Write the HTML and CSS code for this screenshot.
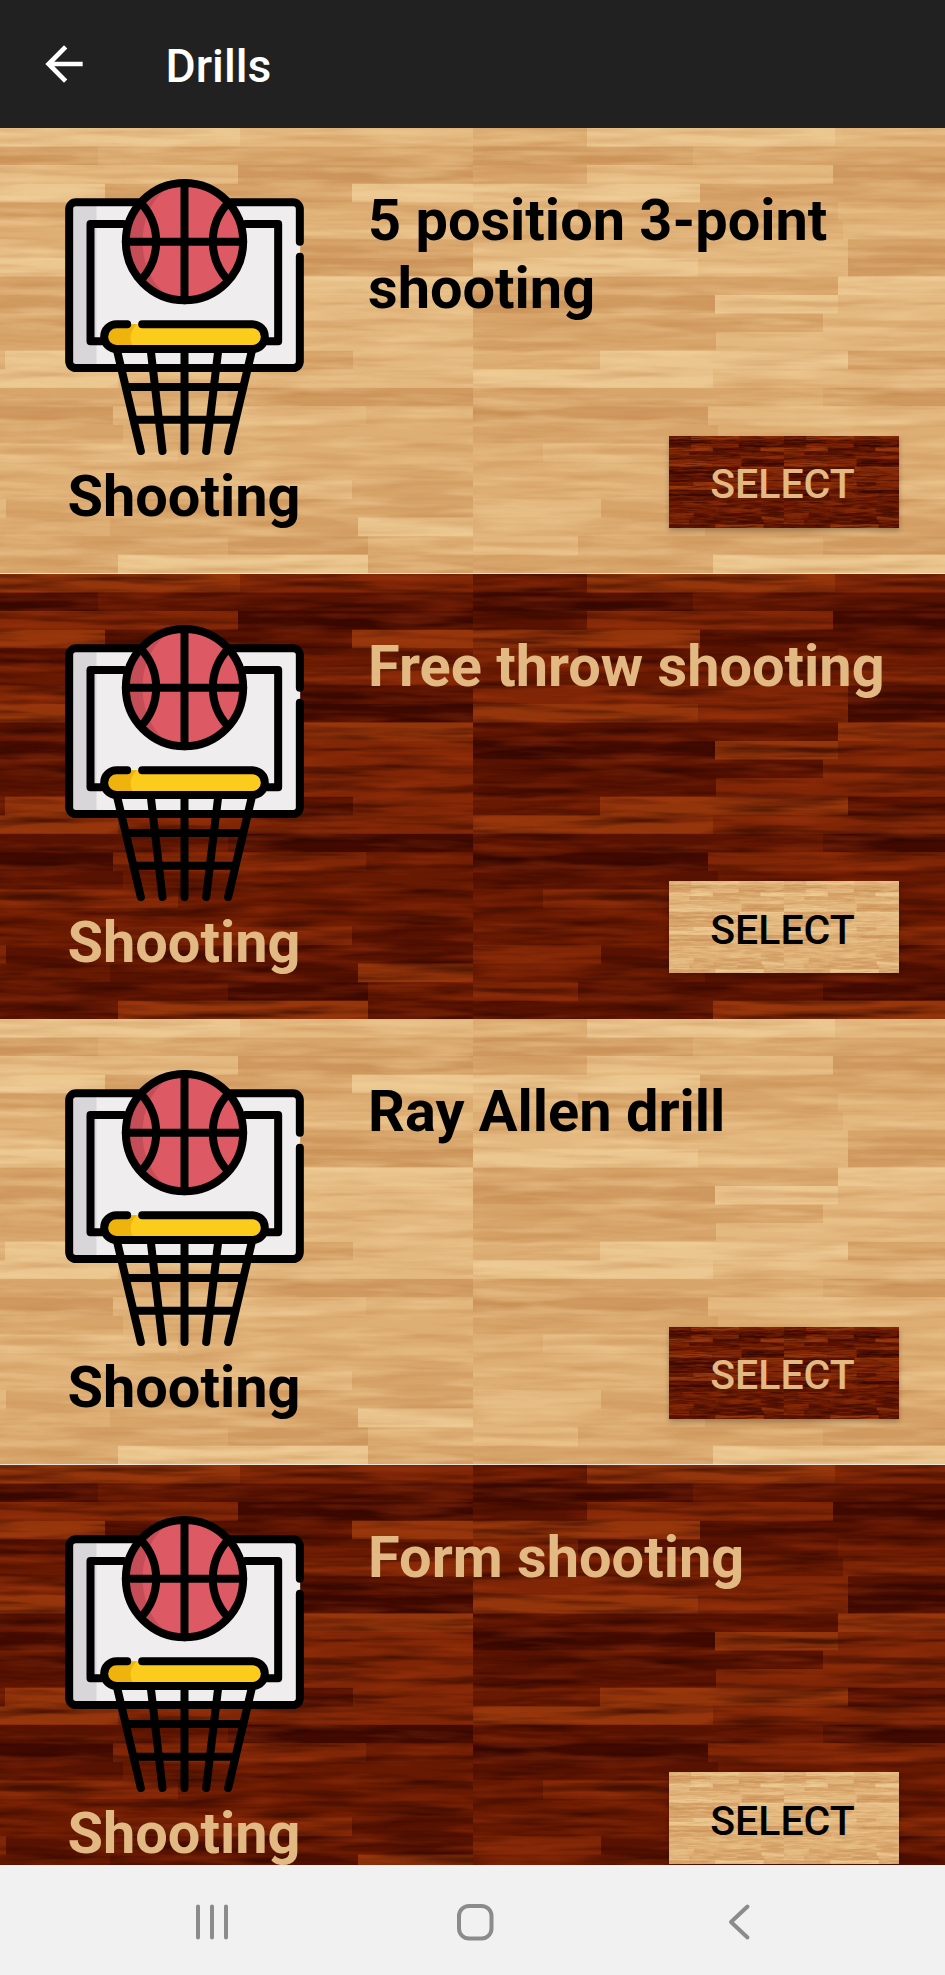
FILE: index.html
```html
<!DOCTYPE html>
<html lang="en">
<head>
<meta charset="utf-8">
<title>Drills</title>
<link rel="stylesheet" href="styles.css">
</head>
<body>
<svg class="defs" width="0" height="0" aria-hidden="true">
  <defs>
    <filter id="grain" x="0" y="0" width="100%" height="100%" color-interpolation-filters="sRGB">
      <feTurbulence type="fractalNoise" baseFrequency="0.008 0.11" numOctaves="3" seed="7"/>
      <feColorMatrix values="0 0 0 0 0  0 0 0 0 0  0 0 0 0 0  2.6 0 0 0 -1.1" result="n"/>
      <feComposite in="SourceGraphic" in2="n" operator="in"/>
    </filter>
    <filter id="shine" x="0" y="0" width="100%" height="100%" color-interpolation-filters="sRGB">
      <feTurbulence type="fractalNoise" baseFrequency="0.01 0.1" numOctaves="3" seed="23"/>
      <feColorMatrix values="0 0 0 0 0  0 0 0 0 0  0 0 0 0 0  2.6 0 0 0 -1.1" result="n"/>
      <feComposite in="SourceGraphic" in2="n" operator="in"/>
    </filter>

    <g id="planks">
      <rect class="t3" width="595" height="446"/>
      <g transform="scale(1 18.57)">
        <path class="t1" d="M0 1h220v1H0zM360 2h235v1H360zM375 7h220v1H375zM0 9h242v1H0zM0 15h235v1H0zM350 22h140v1H350zM475 7h120v1H475zM350 14h245v1H350z"/>
        <path class="t2" d="M220 1h375v1H220zM0 2h114v1H0zM227 3h247v1H227zM105 4h260v1H105zM375 6h220v1H375zM0 8h365v1H0zM0 10h350v1H0zM0 11h243v1H0zM375 12h100v1H375zM0 14h350v1H0zM0 16h245v1H0zM474 19h121v1H474zM128 20h467v1H128zM232 21h248v1H232zM105 22h245v1H105zM0 23h240v1H0zM490 23h105v1H490z"/>
        <path class="t4" d="M362 0h233v1H362zM114 2h246v1H114zM0 4h105v1H0zM370 5h225v1H370zM0 6h375v1H0zM225 7h150v1H225zM365 9h230v1H365zM350 10h245v1H350zM243 11h352v1H243zM475 12h120v1H475zM240 13h355v1H240zM235 15h253v1H235zM70 17h230v1H70zM240 19h234v1H240zM0 20h128v1H0zM0 22h105v1H0z"/>
        <path class="t5" d="M114 0h248v1H114zM0 3h227v1H0zM474 3h121v1H474zM0 7h225v1H0zM365 8h230v1H365zM242 9h123v1H242zM127 12h248v1H127zM0 13h240v1H0zM480 21h115v1H480zM240 23h250v1H240z"/>
      </g>
      <rect class="grain" width="595" height="446" filter="url(#grain)"/>
      <rect class="shine" width="595" height="446" filter="url(#shine)"/>
    </g>

    <symbol id="floor" viewBox="0 0 945 446" preserveAspectRatio="none">
      <svg x="0" y="0" width="473" height="446" viewBox="122 0 473 446"><use href="#planks"/></svg>
      <svg x="473" y="0" width="472" height="446" viewBox="0 0 472 446"><use href="#planks"/></svg>
    </symbol>
    <symbol id="floor-small" viewBox="0 0 230 92" preserveAspectRatio="none">
      <svg width="115" height="92" viewBox="0 0 595 445.5" preserveAspectRatio="none"><use href="#planks"/></svg>
      <svg x="115" width="115" height="92" viewBox="0 0 595 445.5" preserveAspectRatio="none"><use href="#planks"/></svg>
    </symbol>

    <symbol id="hoop" viewBox="45 42 716 828">
      <rect x="57" y="112" width="693" height="497" rx="20" fill="#efedee"/>
      <path d="M77 112h62v497H77a20 20 0 0 1-20-20V132a20 20 0 0 1 20-20z" fill="#d8d6d8"/>
      <circle cx="403" cy="230" r="176" fill="#dd5a65"/>
      <path d="M375 56A176 176 0 0 0 375 404C245 345 245 115 375 56z" fill="#c44d57"/>
      <rect x="162" y="478" width="482" height="74" rx="37" fill="#fccc1d"/>
      <path d="M260 478h-61a37 37 0 0 0 0 74h55c-18-24-18-50 6-74z" fill="#eeb30c"/>
      <g fill="none" stroke="#000" stroke-width="24" stroke-linecap="round" stroke-linejoin="round">
        <path d="M265 112H77a20 20 0 0 0-20 20v457a20 20 0 0 0 20 20h652a20 20 0 0 0 20-20V275M541 112h188a20 20 0 0 1 20 20v98"/>
        <path d="M220 177h-99v352h32M586 177h98v352h-32"/>
        <circle cx="403" cy="230" r="176"/>
        <path d="M403 54v352M227 230h352M273 115c60 65 60 165 0 230M533 115c-60 65-60 165 0 230"/>
        <path d="M231 478h-32a37 37 0 0 0 0 74h408a37 37 0 0 0 0-74H276"/>
        <path d="M201 558l71 300M302 558l35 300M403 558v300M504 558l-36 300M605 558l-71 300M230 666h346M254 764h298"/>
      </g>
    </symbol>
  </defs>
</svg>

<header class="bar">
  <svg class="back" viewBox="0 0 24 24"><path d="M20 11H7.83l5.59-5.59L12 4l-8 8 8 8 1.41-1.41L7.83 13H20v-2z"/></svg>
  <h1 class="bar-title">Drills</h1>
</header>

<main class="list">
  <section class="card light">
    <svg class="wood"><use href="#floor"/></svg>
    <div class="kind"><svg class="hoop"><use href="#hoop"/></svg><span class="label">Shooting</span></div>
    <div class="info"><h2 class="name">5 position 3-point shooting</h2>
      <button class="select dark"><svg class="wood"><use href="#floor-small"/></svg><span class="caption">SELECT</span></button></div>
  </section>
  <section class="card dark">
    <svg class="wood"><use href="#floor"/></svg>
    <div class="kind"><svg class="hoop"><use href="#hoop"/></svg><span class="label">Shooting</span></div>
    <div class="info"><h2 class="name">Free throw shooting</h2>
      <button class="select light"><svg class="wood"><use href="#floor-small"/></svg><span class="caption">SELECT</span></button></div>
  </section>
  <section class="card light">
    <svg class="wood"><use href="#floor"/></svg>
    <div class="kind"><svg class="hoop"><use href="#hoop"/></svg><span class="label">Shooting</span></div>
    <div class="info"><h2 class="name">Ray Allen drill</h2>
      <button class="select dark"><svg class="wood"><use href="#floor-small"/></svg><span class="caption">SELECT</span></button></div>
  </section>
  <section class="card dark">
    <svg class="wood"><use href="#floor"/></svg>
    <div class="kind"><svg class="hoop"><use href="#hoop"/></svg><span class="label">Shooting</span></div>
    <div class="info"><h2 class="name">Form shooting</h2>
      <button class="select light"><svg class="wood"><use href="#floor-small"/></svg><span class="caption">SELECT</span></button></div>
  </section>
</main>

<nav class="system">
  <svg class="key" viewBox="0 0 40 40"><path d="M6 4.500v31M20 4.500v31M34 4.500v31"/></svg>
  <svg class="key" viewBox="0 0 40 40"><rect x="4" y="4" width="32.500" height="32.500" rx="10"/></svg>
  <svg class="key" viewBox="0 0 40 40"><path d="M28.500 4.500L12 20l16.500 15.500"/></svg>
</nav>
</body>
</html>
```
FILE: styles.css
```css
* { box-sizing: border-box; }

body {
  margin: 0;
  height: 1975px;
  display: flex;
  flex-direction: column;
  overflow: hidden;
  font-family: Roboto, "Liberation Sans", sans-serif;
  background: #f1f1f1;
}

.defs { position: absolute; }

.bar {
  flex: none;
  height: 128px;
  padding-left: 36px;
  display: flex;
  align-items: center;
  gap: 73.5px;
  background: #212121;
}
.back { width: 56px; height: 56px; fill: #fff; }
.bar-title {
  margin: 4px 0 0;
  font-size: 46.3px;
  font-weight: 500;
  line-height: 54px;
  color: #fff;
}

.light {
  --t1: #d09a60; --t2: #d7a46a; --t3: #deaf75; --t4: #e4b980; --t5: #ebc68f;
  --grain: rgba(190, 128, 70, .36);
  --shine: rgba(245, 215, 160, .4);
  --text: #000;
}
.dark {
  --t1: #420a00; --t2: #581201; --t3: #681902; --t4: #802606; --t5: #93350b;
  --grain: rgba(42, 4, 0, .65);
  --shine: rgba(170, 58, 14, .4);
  --text: #e3b983;
}
.t1 { fill: var(--t1); }
.t2 { fill: var(--t2); }
.t3 { fill: var(--t3); }
.t4 { fill: var(--t4); }
.t5 { fill: var(--t5); }
.grain { fill: var(--grain); }
.shine { fill: var(--shine); }

.list { flex: none; height: 1737px; overflow: hidden; }

.card {
  position: relative;
  height: 445.6px;
  display: flex;
  color: var(--text);
}
.wood {
  position: absolute;
  inset: 0;
  width: 100%;
  height: 100%;
}
.kind {
  position: relative;
  width: 368px;
  padding-top: 51px;
  display: flex;
  flex-direction: column;
  align-items: center;
}
.hoop { width: 239px; height: 276px; }
.label {
  margin-top: 8px;
  font-size: 57.7px;
  font-weight: 700;
  line-height: 67px;
}
.info {
  position: relative;
  flex: 1;
  padding: 59px 46.5px 46px 0;
  display: flex;
  flex-direction: column;
  justify-content: space-between;
}
.name {
  margin: 0;
  font-size: 57.7px;
  font-weight: 700;
  line-height: 67.5px;
}
.select {
  position: relative;
  align-self: flex-end;
  width: 230px;
  height: 92px;
  padding: 5px 0 0;
  border: 0;
  font: 500 41px/48px Roboto, "Liberation Sans", sans-serif;
  color: var(--text);
  box-shadow: 0 3px 5px rgba(0, 0, 0, .25);
}
.caption { position: relative; left: -1px; }

.system {
  flex: none;
  height: 110px;
  padding: 0 186px 0 191.5px;
  display: flex;
  align-items: center;
  justify-content: space-between;
  background: #f1f1f1;
}
.key {
  width: 40px;
  height: 40px;
  margin-top: 4px;
  fill: none;
  stroke: #8b8b8b;
  stroke-width: 4;
  stroke-linecap: round;
  stroke-linejoin: round;
}
```
